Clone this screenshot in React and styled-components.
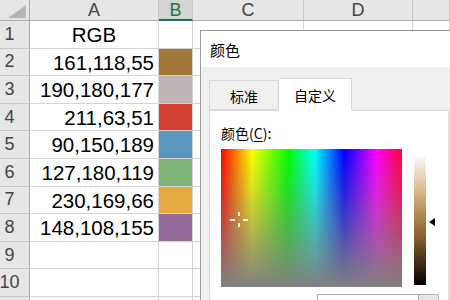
import React from 'react'
import styled, { createGlobalStyle } from 'styled-components'

const rows = [
  { value: 'RGB', color: null, center: true },
  { value: '161,118,55', color: 'rgb(161,118,55)' },
  { value: '190,180,177', color: 'rgb(190,180,177)' },
  { value: '211,63,51', color: 'rgb(211,63,51)' },
  { value: '90,150,189', color: 'rgb(90,150,189)' },
  { value: '127,180,119', color: 'rgb(127,180,119)' },
  { value: '230,169,66', color: 'rgb(230,169,66)' },
  { value: '148,108,155', color: 'rgb(148,108,155)' },
  { value: '', color: null },
  { value: '', color: null },
  { value: '', color: null },
]

const columns = ['A', 'B', 'C', 'D', '']

const GlobalStyle = createGlobalStyle`
  html, body {
    margin: 0;
    padding: 0;
    width: 450px;
    height: 300px;
    overflow: hidden;
    background: #ffffff;
  }
`

const Page = styled.div`
  position: relative;
  width: 450px;
  height: 300px;
  overflow: hidden;
  font-family: 'Liberation Sans', Arial, sans-serif;
`

const Sheet = styled.div`
  display: grid;
  grid-template-columns: 30px 129px 34px 111px 109px 1fr;
  grid-template-rows: 21px;
  grid-auto-rows: 27.6px;
`

const Corner = styled.div`
  position: relative;
  background: #e6e6e6;
  border-right: 1px solid #ababab;
  border-bottom: 1px solid #ababab;
  box-sizing: border-box;

  &::after {
    content: '';
    position: absolute;
    left: 8px;
    top: 5px;
    width: 18px;
    height: 13px;
    background: #b5b5b5;
    clip-path: polygon(100% 0, 100% 100%, 0 100%);
  }
`

const ColHeader = styled.div`
  display: flex;
  align-items: center;
  justify-content: center;
  box-sizing: border-box;
  background: ${p => (p.$active ? '#d3d3d3' : '#e6e6e6')};
  color: ${p => (p.$active ? '#217346' : '#444444')};
  border-right: 1px solid #c6c6c6;
  border-bottom: ${p => (p.$active ? '2px solid #217346' : '1px solid #ababab')};
  font-size: 18px;
  padding-top: 1px;
`

const RowHeader = styled.div`
  display: flex;
  align-items: center;
  justify-content: center;
  padding-right: 10px;
  box-sizing: border-box;
  background: #e6e6e6;
  color: #444444;
  border-right: 1px solid #ababab;
  border-bottom: 1px solid #c6c6c6;
  font-size: 18px;
`

const Cell = styled.div`
  display: flex;
  align-items: flex-end;
  justify-content: ${p => (p.$center ? 'center' : 'flex-end')};
  padding: 0 4px 2px;
  box-sizing: border-box;
  border-right: 1px solid #d4d4d4;
  border-bottom: 1px solid #d4d4d4;
  background: ${p => p.$color || '#ffffff'};
  color: #000000;
  font-size: 20.5px;
  line-height: 1;
  white-space: nowrap;
`

const Dialog = styled.div`
  position: absolute;
  left: 200px;
  top: 30px;
  width: 270px;
  height: 290px;
  box-sizing: border-box;
  border: 1px solid #9c9c9c;
  background: #f0f0f0;
  display: flex;
  flex-direction: column;
  font-family: 'Noto Sans CJK SC', 'Noto Sans', sans-serif;
  color: #000000;
`

const TitleBar = styled.div`
  height: 36px;
  flex: none;
  display: flex;
  align-items: center;
  padding-left: 9px;
  background: #ffffff;
  font-size: 15px;
`

const Body = styled.div`
  padding: 11px 0 0 8px;
  display: flex;
  flex-direction: column;
`

const TabList = styled.div`
  display: flex;
  align-items: flex-end;
  height: 32px;
`

const Tab = styled.div`
  box-sizing: border-box;
  width: ${p => (p.$active ? '73px' : '70px')};
  height: ${p => (p.$active ? '33px' : '30px')};
  display: flex;
  align-items: center;
  justify-content: center;
  border: 1px solid #d9d9d9;
  border-bottom: ${p => (p.$active ? 'none' : '1px solid #d9d9d9')};
  border-left: ${p => (p.$active ? 'none' : '1px solid #d9d9d9')};
  background: ${p => (p.$active ? '#ffffff' : '#f0f0f0')};
  margin-bottom: ${p => (p.$active ? '-1px' : '0')};
  position: relative;
  font-size: 14px;
  padding-top: ${p => (p.$active ? '0' : '2px')};
`

const Panel = styled.div`
  width: 240px;
  height: 200px;
  box-sizing: border-box;
  background: #ffffff;
  border: 1px solid #d9d9d9;
  padding: 13px 0 0 11px;
  display: flex;
  flex-direction: column;
`

const Label = styled.div`
  font-size: 14px;
  line-height: 18px;
  height: 18px;

  u {
    text-underline-offset: 2px;
  }
`

const PickerRow = styled.div`
  display: flex;
  margin-top: 7px;
`

const Spectrum = styled.div`
  position: relative;
  width: 181px;
  height: 138px;
  flex: none;
  background:
    linear-gradient(to bottom, rgba(128, 128, 128, 0), rgba(128, 128, 128, 0.25) 30%, rgb(128, 128, 128)),
    linear-gradient(to right, #ff0000, #ffff00 17%, #00ff00 37%, #00ffff 52%, #0000ff 68%, #ff00ff 86%, #ff0040);
`

const Tick = styled.span`
  position: absolute;
  background: #fff4e4;
  width: ${p => (p.$horizontal ? '5px' : '2px')};
  height: ${p => (p.$horizontal ? '2px' : '4px')};
`

const LumBar = styled.div`
  width: 12px;
  height: 128px;
  margin: 8px 0 0 12px;
  background: linear-gradient(to bottom, #fbf8f2, #d9bc90 25%, #9e7236 55%, #4a3518 80%, #000000);
`

const Pointer = styled.div`
  width: 0;
  height: 0;
  margin: 69px 0 0 3px;
  border-top: 4px solid transparent;
  border-bottom: 4px solid transparent;
  border-right: 6px solid #000000;
`

const FieldRow = styled.div`
  display: flex;
  align-items: flex-start;
  margin-top: 7px;
  margin-left: -3px;
`

const FieldLabel = styled.div`
  width: 99px;
  font-size: 13px;
  color: #d0d0d0;
  padding-top: 2px;
`

const Select = styled.div`
  width: 102px;
  height: 20px;
  box-sizing: border-box;
  border: 1px solid #aaaaaa;
  background: #ffffff;
`

const SelectButton = styled.div`
  width: 20px;
  height: 20px;
  box-sizing: border-box;
  border: 1px solid #b8b8b8;
  border-left: none;
  background: #e6e6e6;
`

export default function App() {
  return (
    <Page>
      <GlobalStyle />
      <Sheet>
        <Corner />
        {columns.map((c, i) => (
          <ColHeader key={i} $active={c === 'B'}>{c}</ColHeader>
        ))}
        {rows.map((r, i) => (
          <React.Fragment key={i}>
            <RowHeader>{i + 1}</RowHeader>
            <Cell $center={r.center}>{r.value}</Cell>
            <Cell $color={r.color} />
            <Cell />
            <Cell />
            <Cell />
          </React.Fragment>
        ))}
      </Sheet>

      <Dialog>
        <TitleBar>颜色</TitleBar>
        <Body>
          <TabList>
            <Tab>标准</Tab>
            <Tab $active>自定义</Tab>
          </TabList>
          <Panel>
            <Label>颜色(<u>C</u>):</Label>
            <PickerRow>
              <Spectrum>
                <Tick style={{ left: 17, top: 63 }} />
                <Tick style={{ left: 17, top: 74 }} />
                <Tick $horizontal style={{ left: 9, top: 70 }} />
                <Tick $horizontal style={{ left: 22, top: 70 }} />
              </Spectrum>
              <LumBar />
              <Pointer />
            </PickerRow>
            <FieldRow>
              <FieldLabel>颜色模式(X):</FieldLabel>
              <Select />
              <SelectButton />
            </FieldRow>
          </Panel>
        </Body>
      </Dialog>
    </Page>
  )
}
